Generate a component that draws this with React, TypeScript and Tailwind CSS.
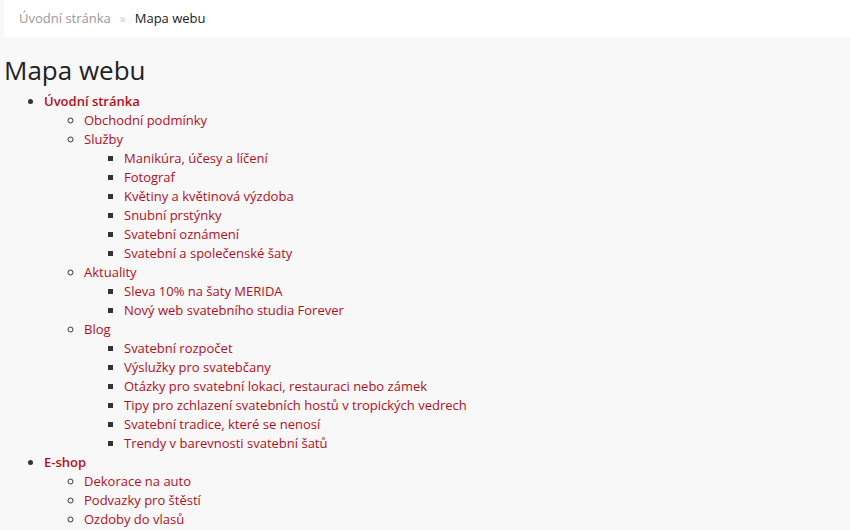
import React from "react";

type Item = { t: string; c?: Item[] };

const tree: Item[] = [
  {
    t: "Úvodní stránka",
    c: [
      { t: "Obchodní podmínky" },
      {
        t: "Služby",
        c: [
          { t: "Manikúra, účesy a líčení" },
          { t: "Fotograf" },
          { t: "Květiny a květinová výzdoba" },
          { t: "Snubní prstýnky" },
          { t: "Svatební oznámení" },
          { t: "Svatební a společenské šaty" },
        ],
      },
      {
        t: "Aktuality",
        c: [
          { t: "Sleva 10% na šaty MERIDA" },
          { t: "Nový web svatebního studia Forever" },
        ],
      },
      {
        t: "Blog",
        c: [
          { t: "Svatební rozpočet" },
          { t: "Výslužky pro svatebčany" },
          { t: "Otázky pro svatební lokaci, restauraci nebo zámek" },
          { t: "Tipy pro zchlazení svatebních hostů v tropických vedrech" },
          { t: "Svatební tradice, které se nenosí" },
          { t: "Trendy v barevnosti svatební šatů" },
        ],
      },
    ],
  },
  {
    t: "E-shop",
    c: [
      { t: "Dekorace na auto" },
      { t: "Podvazky pro štěstí" },
      { t: "Ozdoby do vlasů" },
    ],
  },
];

function List({ items, level }: { items: Item[]; level: number }) {
  const cls =
    level === 0 ? "list-disc" : level === 1 ? "list-[circle]" : "list-[square]";
  return (
    <ul className={`${cls} pl-[40px]`}>
      {items.map((it, i) => (
        <li key={i}>
          <a
            href="#"
            className={`text-[#b0101c] ${level === 0 ? "font-semibold" : ""}`}
          >
            {it.t}
          </a>
          {it.c && <List items={it.c} level={level + 1} />}
        </li>
      ))}
    </ul>
  );
}

export default function App() {
  return (
    <div
      className="min-h-[530px] bg-[#f8f8f8] text-[13px] leading-[19px] text-[#333]"
      style={{ fontFamily: '"Open Sans", sans-serif' }}
    >
      <div className="ml-[4px] h-[37px] bg-white flex items-center pl-[15px]">
        <span className="text-[#999]">Úvodní stránka</span>
        <span className="text-[#ccc] mx-[9px] text-[12px]">»</span>
        <span className="text-[#222]">Mapa webu</span>
      </div>
      <div className="px-[4px]">
        <h1 className="text-[26px] leading-[30px] mt-[18px] mb-[7px] text-[#222] font-normal">
          Mapa webu
        </h1>
        <List items={tree} level={0} />
      </div>
    </div>
  );
}
